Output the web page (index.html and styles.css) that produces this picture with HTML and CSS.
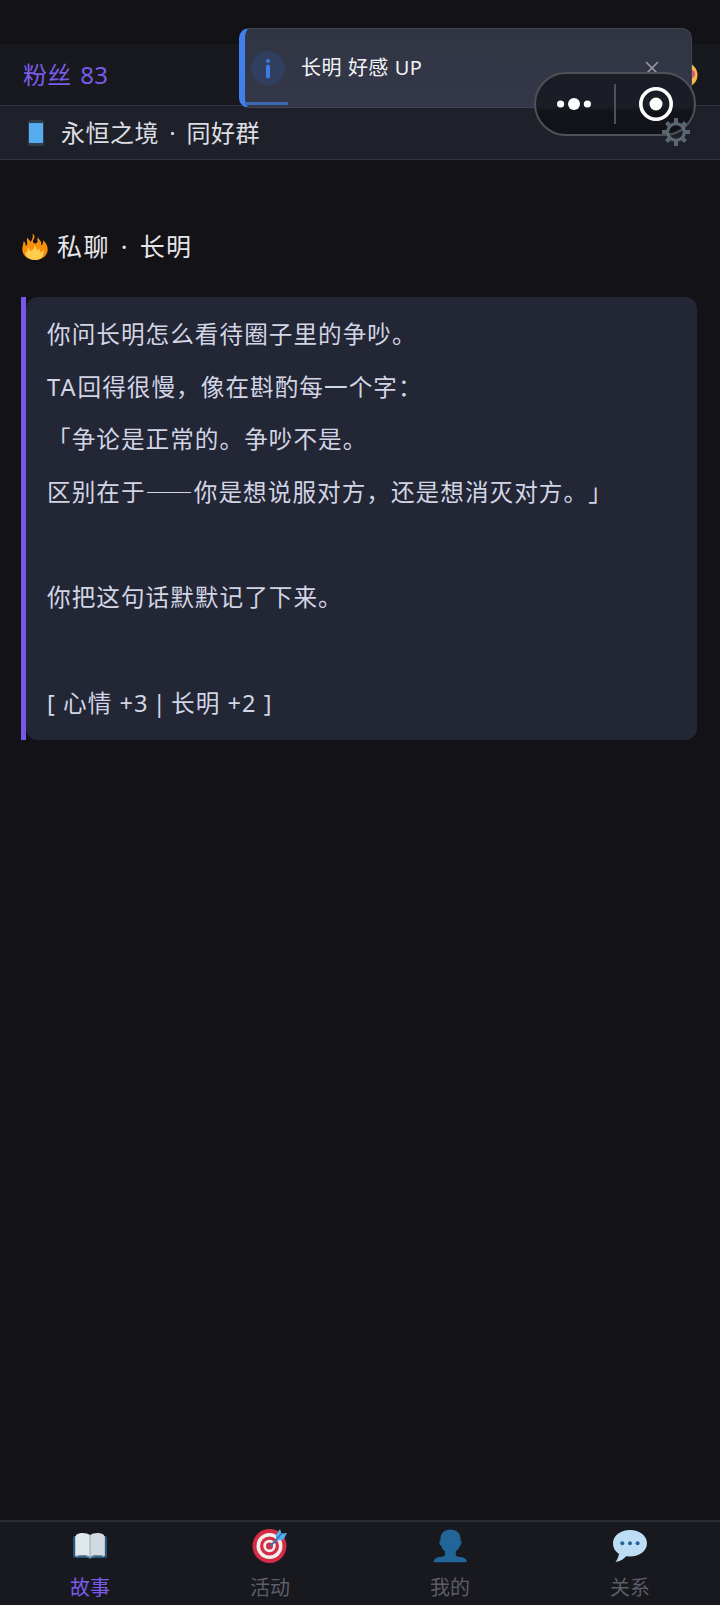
FILE: index.html
```html
<!DOCTYPE html>
<html lang="zh-CN">
<head>
<meta charset="utf-8">
<title>永恒之境</title>
<link rel="stylesheet" href="styles.css">
</head>
<body>
<div class="app">
  <header class="stats">
    <span class="fans">粉丝 83</span>
    <svg class="mood" viewBox="0 0 26 26"><circle cx="13" cy="13" r="12.500" fill="#f5bd45"/><circle cx="19" cy="12" r="4" fill="#d9577b"/></svg>
  </header>
  <div class="group">
    <svg class="phone" viewBox="0 0 18 28"><rect x="1" y="1" width="16" height="26" rx="2.500" fill="#303c49"/><rect x="2" y="4" width="14" height="20" fill="#55acee"/></svg>
    <span class="group-name">永恒之境 · 同好群</span>
  </div>
  <main class="content">
    <h1 class="title">
      <svg class="fire" viewBox="0 0 26 27"><path d="M10.500.5c1.500 1 2.200 2.300 2 3.800-.2 1.500-1.600 2.200-1.600 4 0 1.300 1 2.200 2.300 2.200 1.700 0 2.500-1.300 2.300-3-.2-1.200-.2-2.300.5-3.500.4 2 2.700 3.300 3.200 5.500.2 1 .1 1.900-.2 2.700 1.800-.7 2.400-2.500 1.900-5 3 2.200 4.800 5.500 4.800 9.300C25.700 22.500 20 27 13 27S.3 22.500.3 16.500c0-3.500 1.200-5.500 1.400-8.500 1.500 1.300 2 3.500 2.300 5 1.500-1 1.300-3 1-4.500-.3-1.600-.2-2.500.5-4 .5 1.500 2.500 3.300 3.300 4.500C10 6.500 11.500 4 10.500.5z" fill="#f4900c"/><path d="M5.800 14.500c1.400.8 2 2.200 2.100 3.700 1.700-.9 4.400-1.300 4.700-5.500 2 1.200 2.100 3.600 2.100 5 1.100-.4 1.900-1.500 2.100-2.500 1.100 1.200 1.400 2.700 1.500 4 1.200-.2 2.200-1 2.800-2.200C23 21.500 19.600 27 13.500 27 7 27 3 23.500 3.500 19.800c1.600-.6 2.500-2.700 2.300-5.300z" fill="#ffcc4d"/></svg>
      <span>私聊 · 长明</span>
    </h1>
    <article class="story">
      <p>你问长明怎么看待圈子里的争吵。</p>
      <p><span class="latin">TA</span>回得很慢，像在斟酌每一个字：</p>
      <p>「争论是正常的。争吵不是。</p>
      <p>区别在于<span class="dash">——</span>你是想说服对方，还是想消灭对方。」</p>
      <p>&nbsp;</p>
      <p>你把这句话默默记了下来。</p>
      <p>&nbsp;</p>
      <p class="effect">[ 心情 +3<span class="bar"> | </span>长明 +2 ]</p>
    </article>
  </main>
  <nav class="tabs">
    <a class="tab active">
      <svg viewBox="0 0 36 34"><path d="M1 9q0-2 2-2h30q2 0 2 2v18q0 2-2 2H20l-2 1-2-1H3q-2 0-2-2z" fill="#245779"/><path d="M4 6C8 3 15 4 18 6v22c-4-3-10-2-14-1z" fill="#e1e8ed"/><path d="M18 6c3-2 10-3 14 0v21c-4-1-10-2-14 1z" fill="#d0d9df"/><path d="M3.500 7v20M32.500 7v20" stroke="#b8c6cf"/><path d="M17.500 6v21l1 1V6z" fill="#98a9b5"/><path d="M4 27.500c5-1.200 10-1.500 14 1.500 4-3 9-2.700 14-1.500" fill="none" stroke="#8799a6" stroke-width="1"/></svg>
      <span>故事</span>
    </a>
    <a class="tab">
      <svg viewBox="0 0 36 34"><circle cx="17.500" cy="17" r="17" fill="#d62d47"/><circle cx="17.500" cy="17" r="13" fill="#f3efed"/><circle cx="17.500" cy="17" r="9.500" fill="#d62d47"/><circle cx="17.500" cy="17" r="6.200" fill="#f3efed"/><circle cx="17.500" cy="17" r="3.500" fill="#d62d47"/><path d="m18 17 11-10" stroke="#3978a8" stroke-width="2"/><path d="M23.500 6.500 28 0l1.500 4.500L35 4l-3.500 6.500-7 1.500z" fill="#55acee"/><path d="m24 11 5.500-6.500" stroke="#2677b0" stroke-width="1.200"/></svg>
      <span>活动</span>
    </a>
    <a class="tab">
      <svg viewBox="0 0 36 34"><path d="M18.500.5C24.500.5 28 4 28.500 9v2.500c1.500.2 1.600 4-.7 5.200-.7 2.500-2 4-4 5.600v3.200c0 2 2 2.200 5 2.500 4.300.5 6 2.500 6 5.300H1.700c0-2.800 1.700-4.800 6-5.300 3-.3 5.300-.5 5.300-2.500v-3.200c-2-1.600-3-3.100-3.800-5.600-2.300-1.200-2.200-5-.7-5.200V9C9 4 12.500.5 18.500.5z" fill="#226699"/></svg>
      <span>我的</span>
    </a>
    <a class="tab">
      <svg viewBox="0 0 36 34"><path d="M18 1C27.500 1 35 6.500 35 14.200S27.500 27.500 18 27.500l-4-.3C12 30 8 32.500 3.500 33c2-2.500 3-5 3.500-8.200C3.300 22.500 1 18.800 1 14.200 1 6.500 8.500 1 18 1z" fill="#bdddf4"/><circle cx="10.300" cy="14.300" r="2" fill="#226699"/><circle cx="18" cy="14.300" r="2" fill="#226699"/><circle cx="25.600" cy="14.300" r="2" fill="#226699"/></svg>
      <span>关系</span>
    </a>
  </nav>

  <div class="toast">
    <svg class="info" viewBox="0 0 34 34"><circle cx="17" cy="17" r="17" fill="#303f60"/><circle cx="17" cy="10" r="2" fill="#3f7be4"/><path d="M17 15.500v10" stroke="#3f7be4" stroke-width="4" stroke-linecap="round"/></svg>
    <span class="toast-text">长明 好感 UP</span>
    <svg class="close" viewBox="0 0 14 14"><path d="m1 1 12 12M13 1 1 13" stroke="#999ca5" stroke-width="1.600"/></svg>
    <i class="progress"></i>
  </div>
  <div class="capsule">
    <svg class="dots" viewBox="0 0 34 12"><circle cx="3.600" cy="6" r="3.600"/><circle cx="17" cy="6" r="6"/><circle cx="30.400" cy="6" r="3.600"/></svg>
    <i class="divider"></i>
    <svg class="ring" viewBox="0 0 34 34"><circle cx="17" cy="17" r="15.200" fill="none" stroke="#fff" stroke-width="3.600"/><circle cx="17" cy="17" r="6.500" fill="#fff"/></svg>
  </div>
  <svg class="gear" viewBox="-14 -14 28 28"><g fill="none" stroke="#66757f" stroke-width="4"><circle r="8.400" stroke-width="3.200"/><path d="M0-9v-5M0 9v5M-9 0h-5M9 0h5M-6.500-6.500l-3-3M6.500-6.500l3-3M-6.500 6.500l-3 3M6.500 6.500l3 3"/></g></svg>
</div>
</body>
</html>
```

FILE: styles.css
```css
* { box-sizing: border-box; }
body {
  margin: 0;
  background: #131217;
  font-family: "Noto Sans", "Noto Sans CJK SC", sans-serif;
  font-weight: 400;
  text-spacing-trim: space-all;
}
svg { display: block; flex: none; }
.app {
  position: relative;
  width: 720px;
  height: 1605px;
  padding-top: 44px;
  display: flex;
  flex-direction: column;
  overflow: hidden;
  white-space: nowrap;
}
.stats {
  height: 62px;
  padding: 0 22px 0 23px;
  display: flex;
  align-items: center;
  justify-content: space-between;
  background: #18181f;
  border-bottom: 1px solid #33343f;
}
.fans { margin-top: -3px; color: #7a5ce8; font-size: 24px; letter-spacing: .3px; word-spacing: 2px; }
.mood { width: 26px; height: 26px; }
.group {
  height: 54px;
  padding-left: 27px;
  display: flex;
  align-items: center;
  gap: 16px;
  background: #1e2129;
  border-bottom: 1px solid #33343f;
}
.phone { width: 18px; height: 28px; }
.group-name { margin-top: -3px; color: #dcdee3; font-size: 24px; letter-spacing: .5px; word-spacing: 3.500px; }
.content { flex: 1; padding: 65px 23px 0 21px; }
.title {
  height: 42px;
  margin: 0 0 30px;
  padding-left: 1px;
  display: flex;
  align-items: center;
  gap: 9px;
  color: #e5e5ea;
  font-size: 25px;
  font-weight: 400;
  letter-spacing: 1.400px;
  word-spacing: 3px;
}
.title span { margin-top: -3px; }
.fire { width: 26px; height: 27px; }
.story {
  position: relative;
  height: 443px;
  margin-left: 5px;
  padding: 11px 0 0 21px;
  border-radius: 12px;
  background: #232634;
  color: #d2d5e5;
}
.story::before {
  content: "";
  position: absolute;
  left: -5px;
  top: 0;
  width: 5px;
  height: 443px;
  background: #7858e8;
}
.story p { margin: 0; height: 52.700px; line-height: 52.700px; font-size: 23.600px; letter-spacing: 1.050px; }
.story .latin { letter-spacing: 2px; }
.story .bar { word-spacing: -3px; }
.dash { font-family: "Noto Sans CJK SC", sans-serif; line-height: 1; }
.tabs {
  height: 85px;
  display: flex;
  border-top: 2px solid #2b2b35;
  background: #18181f;
}
.tab {
  flex: 1;
  display: flex;
  flex-direction: column;
  align-items: center;
  padding-top: 7px;
  gap: 10px;
  color: #5d5d68;
  font-size: 20px;
  line-height: 30px;
}
.tab svg { width: 36px; height: 34px; }
.tab.active { color: #7a5ce8; }
.toast {
  position: absolute;
  left: 239px;
  top: 28px;
  width: 453px;
  height: 80px;
  padding: 0 32px 0 6px;
  display: flex;
  align-items: center;
  border: 1px solid #41444f;
  border-left: 6px solid #4080ee;
  border-radius: 10px;
  background: linear-gradient(#303544, #343747);
}
.info { width: 34px; height: 34px; }
.toast-text { margin: -3px 0 0 16px; flex: 1; color: #f3f4f7; font-size: 20px; letter-spacing: .4px; word-spacing: .5px; }
.close { width: 14px; height: 14px; }
.progress { position: absolute; left: 0; bottom: 2px; width: 43px; height: 3px; background: #3c68b4; }
.capsule {
  position: absolute;
  left: 534px;
  top: 72px;
  width: 162px;
  height: 64px;
  padding: 0 21px;
  display: flex;
  align-items: center;
  justify-content: space-between;
  border: 2px solid #505157;
  border-radius: 32px;
  background: linear-gradient(#1b1d26 0 33px, #111318 38px);
}
.dots { width: 34px; height: 12px; fill: #fff; }
.divider { width: 2px; height: 40px; background: #505157; }
.ring { width: 34px; height: 34px; }
.gear { position: absolute; left: 662px; top: 118px; width: 28px; height: 28px; opacity: .85; }
```
